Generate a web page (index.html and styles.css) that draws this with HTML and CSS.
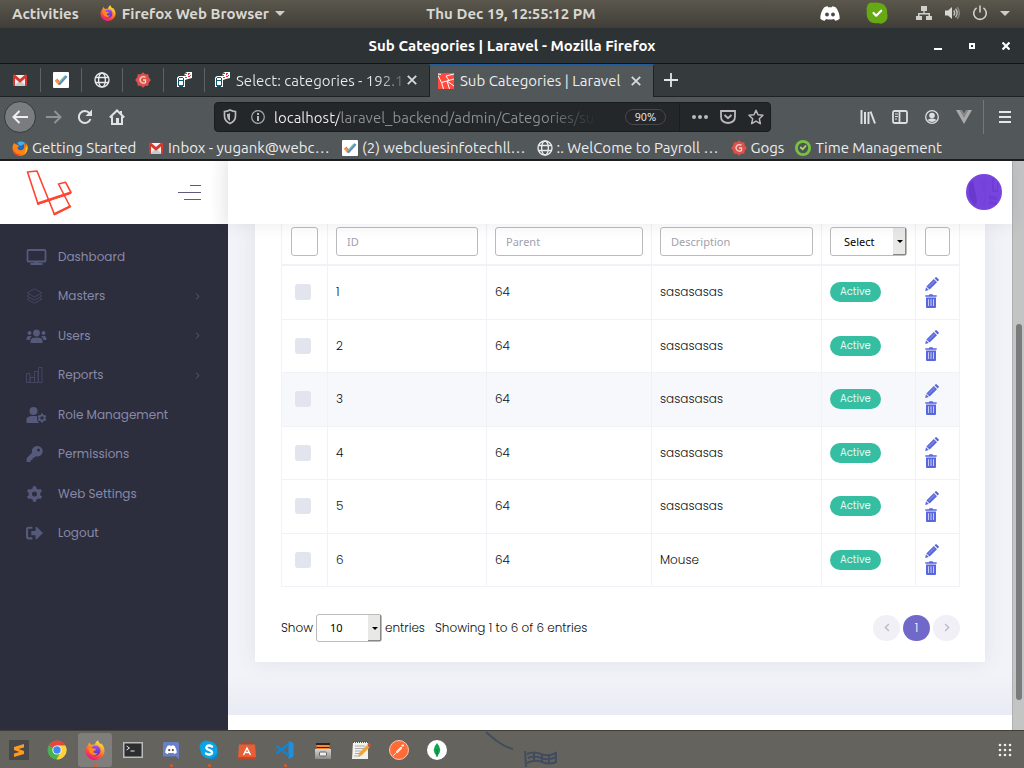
FILE: index.html
```html
<!DOCTYPE html>
<html lang="en">
<head>
<meta charset="utf-8">
<title>Sub Categories | Laravel</title>
<link rel="stylesheet" href="styles.css">
</head>
<body>
<svg class="defs" aria-hidden="true">
  <defs>
    <linearGradient id="fx-g" x1="0.8" y1="0" x2="0.3" y2="1"><stop offset="0" stop-color="#fff04a"/><stop offset="0.4" stop-color="#ff9a26"/><stop offset="0.7" stop-color="#ff4a3c"/><stop offset="1" stop-color="#e31587"/></linearGradient>
    <linearGradient id="fx-p" x1="0" y1="0" x2="0" y2="1"><stop offset="0" stop-color="#9059ff"/><stop offset="1" stop-color="#5b2ab5"/></linearGradient>
    <linearGradient id="steel" x1="0" y1="0" x2="0" y2="1"><stop offset="0" stop-color="#d4d4d2"/><stop offset="1" stop-color="#8d8d8b"/></linearGradient>
  </defs>
  <symbol id="firefox" viewBox="0 0 20 20"><path fill="url(#fx-g)" d="M3 5.2 4.1 2.6 6.4 5C8 4.4 9.4 4.6 10 4.6 10 2.8 11.5 1 13.3.2c0 2 1 2.7 2.3 4l.4-.9c2.6 2.2 3.6 5.400 3.500 8C19 16.300 14.800 20 10 20S.7 16.200.6 11.200C.6 8.500 1.500 6.500 3 5.200z"/><circle cx="10.500" cy="10.500" r="5" fill="url(#fx-p)"/><path fill="#ff8a24" d="M3.400 8.300c1.800-1.300 3.800-.8 4.700.1 1.300 0 2.700.3 3 1-.7 1.100-2.200 1-2.700 2.100.2 1.700 2.600 2.200 4.500 1.200-1.300 2.400-4.500 3-6.700 1.400-1.900-1.300-2.700-3.600-2.800-5.800z"/></symbol>
  <symbol id="firefox-old" viewBox="0 0 20 20"><circle cx="11" cy="9.500" r="8" fill="#1f66c9"/><path fill="#43b2e8" d="M7 3c3-2 7-1.500 9.500.8-1 2.500-4 1.300-4.200 3.400C9.800 7.500 7.500 5.500 7 3z"/><path fill="#ff8212" d="M3 3.500c0 1 1.200 2 3.200 2 .5 1 1.800 1.300 3 1.600-.4 1.300-2.200 1.500-2.400 2.800C8 13.500 12 14 14.500 11c1.500-2 1-5 0-6.500 3 1 3 3 3 3.500.4-1.700 0-3.500-1-5C19 5 20 8 19.500 11 19 16.500 14.500 20 10 20S1 16.500.7 11.500C.5 8.500 1.200 5.300 3 3.500z"/><path fill="#ffcb16" d="M18.500 5.500c2 4.500.5 10.500-4 13 2.500-3 3-5.500 2.500-8 1.300-1.500 1.700-3 1.500-5z"/><path fill="#e5371a" d="M1 10c1 6.500 7 9.500 12 8-4 3-12 1.500-12-8z"/></symbol>
  <symbol id="gmail" viewBox="0 0 16 16"><path fill="#f1f1f1" d="M2 3h12v11H2z"/><path fill="#c9cbcc" d="m2 14 5-5h2l5 5z"/><path fill="#d7372c" d="M1 3.500C1 2.500 2 2 3 2.800L8 7l5-4.200c1-.8 2-.3 2 .7V14h-2V6.500L8 10.700 3 6.500V14H1z"/></symbol>
  <symbol id="tick" viewBox="0 0 16 16"><rect width="16" height="16" rx="1" fill="#fff"/><path fill="none" stroke="#f0a04e" stroke-width="2.600" d="m2.500 8 4 4.500"/><path fill="none" stroke="#ef705c" stroke-width="1.300" d="m3.800 7 3 3.500"/><path fill="none" stroke="#5e86c8" stroke-width="2.600" d="M6 12.500 13.500 4"/><path fill="none" stroke="#75c59c" stroke-width="1.300" d="m6 10.500 6-6.500"/></symbol>
  <symbol id="globe" viewBox="0 0 16 16"><g fill="none" stroke="#e8eaeb" stroke-width="1.400"><circle cx="8" cy="8" r="7"/><ellipse cx="8" cy="8" rx="3.400" ry="7"/><path d="M1.500 5.500h13M1.500 10.500h13"/></g></symbol>
  <symbol id="gogs" viewBox="0 0 16 16"><path fill="#dd5149" d="m8 .3 2.200 1.900h3l.6 3 2 2.800-2 2.800-.6 3h-3L8 15.700l-2.200-1.900h-3l-.6-3L.2 8l2-2.800.6-3h3z"/><path fill="none" stroke="#f6d5d3" stroke-width="1.300" d="M10.500 5.200C7.500 3.700 4.800 5.400 5 8.200c.3 2.800 3.800 3.700 5.500 2.200V8H8"/></symbol>
  <symbol id="adminer" viewBox="0 0 16 16"><path fill="#fff" d="M1 5.500 3 4h5l1-3 2-1h5v6l-4 1-3 1v7H1z"/><path fill="#0b5972" d="M3 5h4v1H3zM2 6h1v8H2zm5 0h1v8H7zM3 8h4v1H3zm0 5h4v2H3z"/><path fill="#e13030" d="M9 1h2v1H9zm3 0h2v1h-2zM8 3h2v1H8zm4-1h1v1h-1zm2 1h1v1h-1zM9 5h2v1H9zm3-1h2v1h-2z"/></symbol>
  <symbol id="laravel-fav" viewBox="0 0 16 16"><path fill="#ff4b3e" d="M0 0h16v16H0z"/><path fill="none" stroke="#fff" stroke-width="1" d="M0 2.500 3.500 9.500 16 6M3.500 9.500 5.500 16M9 8l2.500 8M9 8 16 13M8 3l8-2M8 3l3 4.500M0 1l3 .5"/></symbol>
  <symbol id="clock" viewBox="0 0 16 16"><circle cx="8" cy="8" r="8" fill="#7ac142"/><circle cx="8" cy="8" r="5.200" fill="#4f5456"/><path fill="none" stroke="#a9df61" stroke-width="1.700" d="m5.200 7 2.500 2.300L11 5.500"/></symbol>
  <symbol id="close" viewBox="0 0 10 10"><path fill="none" stroke="#d8dadb" stroke-width="1.800" d="m.8.8 8.400 8.400m0-8.400L.8 9.200"/></symbol>
  <symbol id="monitor" viewBox="0 0 20 16"><rect x="1" y="1" width="18" height="11.500" rx="1" fill="none" stroke="currentColor" stroke-width="1.800"/><path fill="currentColor" d="M8 12h4v2h4v2H4v-2h4z"/></symbol>
  <symbol id="layers" viewBox="0 0 16 16"><g fill="none" stroke="currentColor" stroke-width="1"><path d="m8 .8 7.300 4L8 9 .7 4.800z"/><path d="M2.500 7 .7 8 8 12.200 15.300 8l-1.800-1M2.500 10.100.7 11.200 8 15.300l7.300-4.100-1.800-1.100"/></g></symbol>
  <symbol id="users" viewBox="0 0 20 16"><g fill="currentColor"><circle cx="10" cy="5" r="3.400"/><circle cx="3" cy="5" r="2"/><circle cx="17" cy="5" r="2"/><path d="M4 15v-2c0-2.500 2-3.500 6-3.500s6 1 6 3.500v2zM0 12c0-3 .5-4 3-4 1.200 0 2 .2 2.500.8C4 9.500 3.400 10.500 3.200 12zM20 12c0-3-.5-4-3-4-1.200 0-2 .2-2.500.8 1.500.7 2.100 1.700 2.300 3.200z"/></g></symbol>
  <symbol id="bars" viewBox="0 0 17 16"><g fill="none" stroke="currentColor" stroke-width="1"><path d="M.5 6.500H4v9H.5zM4 10.500h4.500v5H4zM8.500 4.500H12v11H8.500zM12.500.5H16v15h-3.500z"/></g></symbol>
  <symbol id="user-cog" viewBox="0 0 20 16"><g fill="currentColor"><circle cx="7" cy="4" r="4"/><path d="M0 16v-3c0-3 2-4 7-4 1.600 0 2.900.1 3.900.5-.8 2.500-.3 4.500 1.800 6.500z"/></g><g fill="none" stroke="currentColor"><circle cx="15.500" cy="11" r="2.600" stroke-width="1.800"/><path stroke-width="2" d="M15.500 6.500v2M15.500 13.500v2M11.600 8.750l1.700 1M17.700 12.250l1.700 1M11.600 13.250l1.700-1M17.700 9.750l1.700-1"/></g></symbol>
  <symbol id="key" viewBox="0 0 16 16"><path fill="currentColor" fill-rule="evenodd" d="M10.700 0A5.300 5.300 0 0 0 5.600 6.800L.3 12 0 15.500l.5.500H4v-2h2v-2h1.500l1.700-1.700A5.300 5.300 0 1 0 10.700 0zM12 2.500A1.500 1.500 0 1 1 12 5.500 1.500 1.500 0 0 1 12 2.500z"/></symbol>
  <symbol id="cog" viewBox="0 0 16 16"><g fill="none" stroke="currentColor"><circle cx="8" cy="8" r="4.200" stroke-width="3.400"/><path stroke-width="3.400" stroke-linejoin="round" d="M8 .3V3M8 13v2.700M1.300 4.150l2.400 1.400M12.300 10.450l2.400 1.400M1.300 11.850l2.400-1.400M12.300 5.550l2.400-1.400"/></g></symbol>
  <symbol id="logout" viewBox="0 0 16 12"><path fill="none" stroke="currentColor" stroke-width="2" d="M6 1H2.500Q1 1 1 2.500v7Q1 11 2.500 11H6"/><path fill="currentColor" d="M5 4h4V.7Q9.500-.4 10.500.6L16 6l-5.500 5.400Q9.500 12.400 9 11.300V8H5z"/></symbol>
  <symbol id="chev" viewBox="0 0 5 8"><path fill="none" stroke="currentColor" stroke-width="1.200" d="m.8.8 3.200 3.200L.8 7.200"/></symbol>
  <symbol id="pencil" viewBox="0 0 14 14"><path fill="#5867dd" d="m8.800 2 3.200 3.200L4.600 12.500 1.400 9.400zM9.500 1.300l.9-.9q.7-.6 1.400 0l1.800 1.800q.6.700 0 1.400l-.9.9zM1 10.200l2.800 2.800L.2 13.900z"/><path stroke="#a9a8ee" stroke-width=".8" d="M3.600 9.900 9.800 3.700"/></symbol>
  <symbol id="trash" viewBox="0 0 12 14"><path fill="#5867dd" d="M.3 1.300h3.500L4.500.2h3l.7 1.100h3.500v1.500H.3zM1 3.600h10V13q0 1-1 1H2q-1 0-1-1z"/><path stroke="#d5d5fa" stroke-width=".9" d="M3.500 5.200V12M6 5.200V12M8.500 5.200V12"/></symbol>
  <symbol id="discord" viewBox="0 0 20 15"><path fill="#fff" d="M4 1.500Q6.300.3 7.700.3l.5 1h3.600l.5-1Q14.500.5 16 1.500q3.600 5 3.700 11.200-2.300 2-4.500 2.100L14 13q-4 1-8 0l-1.200 1.800Q2.300 14.700.3 12.700.3 6.500 4 1.500z"/><g class="discord-eyes"><circle cx="7" cy="8.500" r="1.900"/><circle cx="13" cy="8.500" r="1.900"/></g></symbol>
</svg>

<header class="topbar">
  <div class="topbar-left">
    <button class="plain">Activities</button>
    <button class="plain app-menu"><svg class="i16"><use href="#firefox"/></svg>Firefox Web Browser<i class="caret"></i></button>
  </div>
  <time class="clock">Thu Dec 19, 12:55:12 PM</time>
  <div class="topbar-right">
    <svg class="tray-discord"><use href="#discord"/></svg>
    <svg width="22" height="22" viewBox="0 0 22 22"><path fill="#66a913" d="M1 5Q2-1 8 .8 12-.2 17 2q5 4 4 9 1.500 4-1 8-4 4-8 2-6 1-9.500-3Q0 14 .8 9 .2 7 1 5z"/><path fill="none" stroke="#fff" stroke-width="2.200" stroke-linecap="round" stroke-linejoin="round" d="m7.500 11 2.700 2.700 5-5"/></svg>
    <svg width="16" height="16" viewBox="0 0 16 16" fill="#d0cfcb"><path d="M5 1h6v5H8.700v2H14v3h2v4h-6v-4h2.500V9.500h-9V11H6v4H0v-4h2V8h5.300V6H5z"/></svg>
    <svg width="16" height="16" viewBox="0 0 16 16"><path fill="#d8d7d4" d="M1 5.500h3L8 2v12L4 10.500H1z"/><g fill="none" stroke="#c2c0bc" stroke-width="1.400"><path d="M9.700 5.500q2 2.500 0 5M11.500 3.800q3.300 4.200 0 8.400"/><path stroke="#8c8a84" d="M13.200 2.200q4.300 5.800 0 11.600"/></g></svg>
    <svg width="16" height="16" viewBox="0 0 16 16" fill="none" stroke="#d0cfcb" stroke-width="1.600"><path d="M4.600 2.800a6.300 6.300 0 1 0 6.800 0M8 .5v7"/></svg>
    <i class="caret"></i>
  </div>
</header>

<div class="titlebar">
  <h1>Sub Categories | Laravel - Mozilla Firefox</h1>
  <div class="window-buttons">
    <button aria-label="Minimize"><svg width="8" height="10"><path fill="#fff" d="M0 7h8v2H0z"/></svg></button>
    <button aria-label="Restore"><svg width="6" height="6"><path fill="none" stroke="#fff" stroke-width="2" d="M1 1h4v4H1z"/></svg></button>
    <button aria-label="Close"><svg width="8" height="8"><path stroke="#fff" stroke-width="2.200" d="m.5.5 7 7m0-7-7 7"/></svg></button>
  </div>
</div>

<nav class="tabs" aria-label="Tabs">
  <button class="pinned" aria-label="Gmail"><svg class="i16"><use href="#gmail"/></svg></button>
  <button class="pinned" aria-label="Tasks"><svg class="i16"><use href="#tick"/></svg></button>
  <button class="pinned" aria-label="Payroll"><svg class="i16"><use href="#globe"/></svg></button>
  <button class="pinned" aria-label="Gogs"><svg class="i16"><use href="#gogs"/></svg></button>
  <button class="pinned" aria-label="Adminer"><svg class="i16"><use href="#adminer"/></svg></button>
  <div class="tab"><svg class="i16"><use href="#adminer"/></svg><span class="tab-title fade">Select: categories - 192.1</span><button aria-label="Close tab"><svg class="i10"><use href="#close"/></svg></button></div>
  <div class="tab active"><svg class="i16"><use href="#laravel-fav"/></svg><span class="tab-title">Sub Categories | Laravel</span><button aria-label="Close tab"><svg class="i10"><use href="#close"/></svg></button></div>
  <button class="new-tab" aria-label="New tab"><svg width="14" height="14"><path stroke="#e3e5e6" stroke-width="1.800" d="M7 0v14M0 7h14"/></svg></button>
</nav>

<div class="toolbar">
  <button class="tool back" aria-label="Back"><svg width="17" height="14" fill="none" stroke="#eee" stroke-width="2"><path d="M1.500 7H16M7.500 1l-6 6 6 6"/></svg></button>
  <button class="tool" aria-label="Forward"><svg width="17" height="14" fill="none" stroke="#909496" stroke-width="2"><path d="M1 7h14.500M9.500 1l6 6-6 6"/></svg></button>
  <button class="tool" aria-label="Reload"><svg width="16" height="16"><path fill="none" stroke="#e0e2e3" stroke-width="2" d="M12.500 4.200A6 6 0 1 0 13.500 10"/><path fill="#e0e2e3" d="M15 .5V7H8.500z"/></svg></button>
  <button class="tool" aria-label="Home"><svg width="16" height="16"><path fill="none" stroke="#e0e2e3" stroke-width="2" d="M.8 8.500 8 1.500l7.200 7M3 7.500V15h10V7.500"/><path fill="#e0e2e3" d="M7 9h3v6H7zM11 2h2v4h-2z"/></svg></button>
  <div class="urlbar">
    <svg class="shield" width="14" height="16" viewBox="0 0 14 16"><path fill="none" stroke="#b8babc" stroke-width="1.700" d="M7 1q3 1.500 5.500 1.500V7q0 5-5.500 7.500Q1.500 12 1.500 7V2.500Q4 2.500 7 1z"/><path fill="#b8babc" d="M7 4v8Q4 10 4 7V5q2 0 3-1z"/></svg>
    <svg class="info" width="14" height="14"><circle cx="7" cy="7" r="6.300" fill="none" stroke="#a8abad" stroke-width="1.200"/><path fill="#b8babc" d="M6 3h2v2H6zm0 3h2v5H6z"/></svg>
    <input type="text" aria-label="Address" value="localhost/laravel_backend/admin/Categories/su">
    <button class="zoom">90%</button>
    <span class="url-actions">
      <svg width="16" height="4" fill="#b8babc"><circle cx="2" cy="2" r="2"/><circle cx="8" cy="2" r="2"/><circle cx="14" cy="2" r="2"/></svg>
      <svg width="16" height="14" fill="none" stroke="#b8babc" stroke-width="1.800"><path d="M1 1h14v5.500q0 6-7 6.500-7-.5-7-6.500z"/><path d="m4.500 5 3.500 3.200L11.500 5"/></svg>
      <svg width="16" height="16" fill="none" stroke="#b8babc" stroke-width="1.500" stroke-linejoin="round"><path d="m8 1.300 2 4.500 5 .5-3.700 3.400 1 5L8 12.200l-4.300 2.500 1-5L1 6.300l5-.5z"/></svg>
    </span>
  </div>
  <button class="tool" aria-label="Library"><svg width="16" height="14" stroke="#dcdedf" stroke-width="2"><path d="M1.500 0v14M5 2v12M8.500 2v12M10.500 1.500 15 13.500"/></svg></button>
  <button class="tool" aria-label="Sidebars"><svg width="16" height="14" fill="none" stroke="#dcdedf" stroke-width="1.800"><rect x="1" y="1" width="14" height="12" rx="1.500"/><path d="M7.500 1v12"/><path stroke-width="1" d="M3 4h3M3 6.500h3M3 9h2"/></svg></button>
  <button class="tool" aria-label="Account"><svg width="14" height="14"><circle cx="7" cy="7" r="6.300" fill="none" stroke="#dcdedf" stroke-width="1.300"/><circle cx="7" cy="5.500" r="2.800" fill="#dcdedf"/><path fill="#dcdedf" d="M2.500 10q2-2 4.500-1.500 2.500-.5 4.500 1.500-4.500 4-9 0z"/></svg></button>
  <button class="tool" aria-label="Vue"><svg width="16" height="14"><path fill="#aaa" d="M0 0h4l4 7 4-7h4L8 14z"/><path fill="#868889" d="M3.500 0H6l2 3.500L10 0h2.500L8 8z"/></svg></button>
  <i class="tool-divider"></i>
  <button class="tool" aria-label="Menu"><svg width="12" height="12" fill="#e4e6e7"><path d="M0 0h12v2H0zM0 5h12v2H0zM0 10h12v2H0z"/></svg></button>
</div>

<nav class="bookmarks" aria-label="Bookmarks">
  <a href="#" class="start"><svg class="i16"><use href="#firefox-old"/></svg><span>Getting Started</span></a>
  <a href="#" class="long"><svg class="i16"><use href="#gmail"/></svg><span>Inbox - yugank@webc…</span></a>
  <a href="#" class="long"><svg class="i16"><use href="#tick"/></svg><span>(2) webcluesinfotechll…</span></a>
  <a href="#" class="long"><svg class="i16"><use href="#globe"/></svg><span>:. WelCome to Payroll …</span></a>
  <a href="#"><svg class="i16"><use href="#gogs"/></svg><span>Gogs</span></a>
  <a href="#"><svg class="i16"><use href="#clock"/></svg><span>Time Management</span></a>
</nav>

<div class="page">
  <aside class="sidebar">
    <div class="brand">
      <svg width="46" height="46" viewBox="0 0 46 46" fill="none" stroke="#ff4431" stroke-linejoin="round" stroke-linecap="round"><path stroke-width="1.600" d="M1.500 2 11 1 28.500 44.500 44 36.500 32.500 14 39.500 12.200 45 22.500 12 34z"/><path stroke-width="2.400" d="M12 33.500 44 23M28.500 44 44 36.500"/></svg>
      <button class="burger" aria-label="Toggle menu"><i></i><i></i><i></i></button>
    </div>
    <ul class="menu">
      <li><a href="#"><svg class="wide"><use href="#monitor"/></svg>Dashboard</a></li>
      <li><a href="#"><svg class="thin"><use href="#layers"/></svg>Masters<svg class="arrow"><use href="#chev"/></svg></a></li>
      <li><a href="#"><svg class="wide"><use href="#users"/></svg>Users<svg class="arrow"><use href="#chev"/></svg></a></li>
      <li><a href="#"><svg class="thin"><use href="#bars"/></svg>Reports<svg class="arrow"><use href="#chev"/></svg></a></li>
      <li><a href="#"><svg class="wide"><use href="#user-cog"/></svg>Role Management</a></li>
      <li><a href="#"><svg><use href="#key"/></svg>Permissions</a></li>
      <li><a href="#"><svg><use href="#cog"/></svg>Web Settings</a></li>
      <li><a href="#"><svg><use href="#logout"/></svg>Logout</a></li>
    </ul>
  </aside>
  <div class="main">
    <div class="header">
      <svg width="36" height="36" viewBox="0 0 36 36" role="img" aria-label="Profile"><clipPath id="av"><circle cx="18" cy="18" r="18"/></clipPath><g clip-path="url(#av)"><path fill="#7745dd" d="M0 0h36v36H0z"/><path fill="#6938cd" d="m3 9 4-2 4 20-2 5-6-9z"/><path fill="#6e3dd4" d="M26 4h2v12h3V8h1v10h-6zM23 21l8 2v3l-8-1zm0 6 8 1v3l-8-1z"/><path stroke="#7340d8" d="m14 4 4 14V3M21 8l-3 22" fill="none"/></g></svg>
    </div>
    <main class="content">
      <section class="card">
        <table>
          <colgroup><col class="c-check"><col class="c-id"><col class="c-parent"><col><col class="c-status"><col class="c-act"></colgroup>
          <thead>
            <tr>
              <th><input type="text" aria-label="Filter selection"></th>
              <th><input type="text" aria-label="ID" placeholder="ID"></th>
              <th><input type="text" aria-label="Parent" placeholder="Parent"></th>
              <th><input type="text" aria-label="Description" placeholder="Description"></th>
              <th><span class="select"><select aria-label="Status"><option>Select</option><option>Active</option></select></span></th>
              <th><input type="text" aria-label="Filter actions"></th>
            </tr>
          </thead>
          <tbody>
            <tr><td><input type="checkbox" aria-label="Row 1"></td><td>1</td><td>64</td><td>sasasasas</td><td><span class="badge">Active</span></td><td><span class="actions"><button aria-label="Edit"><svg><use href="#pencil"/></svg></button><button aria-label="Delete"><svg class="bin"><use href="#trash"/></svg></button></span></td></tr>
            <tr><td><input type="checkbox" aria-label="Row 2"></td><td>2</td><td>64</td><td>sasasasas</td><td><span class="badge">Active</span></td><td><span class="actions"><button aria-label="Edit"><svg><use href="#pencil"/></svg></button><button aria-label="Delete"><svg class="bin"><use href="#trash"/></svg></button></span></td></tr>
            <tr class="hovered"><td><input type="checkbox" aria-label="Row 3"></td><td>3</td><td>64</td><td>sasasasas</td><td><span class="badge">Active</span></td><td><span class="actions"><button aria-label="Edit"><svg><use href="#pencil"/></svg></button><button aria-label="Delete"><svg class="bin"><use href="#trash"/></svg></button></span></td></tr>
            <tr><td><input type="checkbox" aria-label="Row 4"></td><td>4</td><td>64</td><td>sasasasas</td><td><span class="badge">Active</span></td><td><span class="actions"><button aria-label="Edit"><svg><use href="#pencil"/></svg></button><button aria-label="Delete"><svg class="bin"><use href="#trash"/></svg></button></span></td></tr>
            <tr><td><input type="checkbox" aria-label="Row 5"></td><td>5</td><td>64</td><td>sasasasas</td><td><span class="badge">Active</span></td><td><span class="actions"><button aria-label="Edit"><svg><use href="#pencil"/></svg></button><button aria-label="Delete"><svg class="bin"><use href="#trash"/></svg></button></span></td></tr>
            <tr><td><input type="checkbox" aria-label="Row 6"></td><td>6</td><td>64</td><td>Mouse</td><td><span class="badge">Active</span></td><td><span class="actions"><button aria-label="Edit"><svg><use href="#pencil"/></svg></button><button aria-label="Delete"><svg class="bin"><use href="#trash"/></svg></button></span></td></tr>
          </tbody>
        </table>
        <div class="table-footer">
          <label>Show <span class="select length"><select><option>10</option><option>25</option></select></span> entries</label>
          <p>Showing 1 to 6 of 6 entries</p>
          <div class="pager">
            <button aria-label="Previous"><svg class="prev"><use href="#chev"/></svg></button>
            <button class="current">1</button>
            <button aria-label="Next"><svg><use href="#chev"/></svg></button>
          </div>
        </div>
      </section>
    </main>
    <footer class="page-footer"></footer>
  </div>
  <div class="scrollbar"><i></i></div>
</div>

<footer class="dock">
  <button aria-label="Sublime Text"><svg width="20" height="20"><rect width="20" height="20" rx="1" fill="#46484a"/><path fill="#ff9a1f" d="m5 7 10-3v3.500L9.500 9l5.500 2v3L5 17v-3.500l5.500-1.500L5 10z"/></svg></button>
  <button aria-label="Chrome"><svg width="20" height="20"><circle cx="10" cy="10" r="9.500" fill="#4caf50"/><path fill="#e2483d" d="M10 10 1.800 5.200A9.500 9.500 0 0 1 18.400 5.500H10z"/><path fill="#fdd23a" d="M10 5.500h8.400A9.500 9.500 0 0 1 9.500 19.500l4.500-8z"/><circle cx="10" cy="10" r="4.600" fill="#fff"/><circle cx="10" cy="10" r="3.700" fill="#4285f4"/></svg></button>
  <button class="focused running" aria-label="Firefox"><svg width="20" height="20"><use href="#firefox"/></svg></button>
  <button aria-label="Terminal"><svg width="20" height="16"><path fill="#bbb" d="M0 0h20v16H0z"/><path fill="#2b2d2e" d="M1.500 1.500h17v13h-17z"/><path fill="none" stroke="#eee" d="m3.500 4 3 2-3 2M7.500 9h4"/></svg></button>
  <button class="running" aria-label="Discord"><svg width="18" height="18" viewBox="0 0 18 18"><path fill="#6a7fc9" d="M2.500 1h13Q17 1 17 2.500V18l-3-2.500H2.500Q1 15.500 1 14V2.500Q1 1 2.500 1z"/><svg x="3" y="4" width="12" height="9"><use href="#discord"/></svg></svg></button>
  <button class="running" aria-label="Skype"><svg width="20" height="20"><circle cx="7" cy="7" r="6.500" fill="#0a9fdf"/><circle cx="13.500" cy="13.500" r="6" fill="#0a86c8"/><circle cx="10" cy="10" r="8.500" fill="#0ba4e4"/><path fill="none" stroke="#fff" stroke-width="2.400" stroke-linecap="round" d="M13 6.500Q10 4.500 8 6.200 6 8.500 9.800 9.800q4.700 1.500 2.700 4-2.300 1.700-5.500-.3"/></svg></button>
  <button aria-label="Software"><svg width="20" height="20"><path fill="none" stroke="#b9402a" stroke-width="1.500" d="M6 6V3q4-3.500 8 0v3"/><path fill="#e95f35" d="M2 4.500h16L19 18H1z"/><path fill="#c5472b" d="M1 17h18v2H1z"/><path fill="none" stroke="#fff" stroke-width="1.400" d="m6.500 15 3.500-7 3.500 7M7 12.500h6"/></svg></button>
  <button class="running" aria-label="Code"><svg width="20" height="20"><path fill="#2090dc" d="m13.500 1 5 2v13.500l-5 2.500z"/><path fill="none" stroke="#1683cc" stroke-width="2.400" d="m1.500 6 12.500 9.800M1.500 13.500 14 3.500"/></svg></button>
  <button aria-label="Files"><svg width="18" height="20"><path fill="#656361" d="M2 1h14l2 10H0z"/><path fill="#f28a3c" d="M2.500 4h13v5h-13z"/><path fill="#3c2215" d="M2 3h14v2H2zM2.500 7h13v1h-13z"/><path fill="url(#steel)" d="M1 9h16v10H1z"/><rect x="5.500" y="12" width="7" height="4" rx="1" fill="#eee" stroke="#666"/></svg></button>
  <button aria-label="Text Editor"><svg width="20" height="20"><path fill="#f2f2ec" d="M2 2h15v17H1z"/><path stroke="#555" stroke-dasharray="1 1" d="M2 2h15" stroke-width="2"/><path stroke="#aaa" d="M4 6h10M4 8.500h10M4 11h6M4 13.500h5M3 16h6"/><path fill="#f2a33a" d="m8 13 8-8 2.500 2.500-8 8-3 1z"/><path fill="#e0473d" d="m16 4 2-1 2 2-1 2z"/></svg></button>
  <button aria-label="Postman"><svg width="20" height="20"><circle cx="10" cy="10" r="9.500" fill="#ff6c37" stroke="#ffc6af"/><path stroke="#fff" stroke-width="2.200" stroke-linecap="round" d="m8 12 4-4M13.500 5.500h.5"/><path stroke="#ffe0d4" d="m4 16 8-8"/></svg></button>
  <button aria-label="MongoDB"><svg width="20" height="20"><circle cx="10" cy="10" r="10" fill="#fff"/><path fill="#13a353" d="M10 3q6.500 7 0 13.500Q3.500 10 10 3z"/><path stroke="#0b7a3d" d="M10 9v8"/></svg></button>
  <svg class="wallpaper" width="90" height="37" fill="none" stroke="#414d5d" stroke-width="2"><path d="m4 1 7 6q11 9 20 11M43 20l1 16" /><path d="M45 23q7-3 14 0t15-1v9q-7 3-14 0t-15 1M46 27q6-3 13 0t15-1M52 22v9M60 23v9M67 23v9"/></svg>
  <button class="apps" aria-label="Show applications"><svg width="14" height="14" fill="#f0f0f0"><g id="r"><circle cx="2" cy="2" r="1.300"/><circle cx="7" cy="2" r="1.300"/><circle cx="12" cy="2" r="1.300"/></g><use href="#r" y="5"/><use href="#r" y="10"/></svg></button>
</footer>
</body>
</html>
```
FILE: styles.css
```css
* { box-sizing: border-box; }
html, body { height: 100%; }
body {
  margin: 0;
  display: flex;
  flex-direction: column;
  overflow: hidden;
  font-family: Ubuntu, "Noto Sans", sans-serif;
  font-size: 15px;
  color: #eceded;
  background: #52575a;
}
button {
  border: 0;
  padding: 0;
  background: none;
  color: inherit;
  font: inherit;
  display: flex;
  align-items: center;
  justify-content: center;
}
a { color: inherit; text-decoration: none; }
svg { flex: none; display: block; }
.defs { position: absolute; width: 0; height: 0; }
.i16 { width: 16px; height: 16px; }
.i10 { width: 10px; height: 10px; }

/* Desktop panel */
.topbar {
  flex: 0 0 28px;
  display: grid;
  grid-template-columns: 1fr auto 1fr;
  align-items: center;
  padding: 0 14px 2px 12px;
  background: linear-gradient(#5b574d, #403e38);
  color: #d9d7d2;
  font-weight: 700;
  font-size: 15px;
}
.topbar-left, .topbar-right, .app-menu { display: flex; align-items: center; }
.topbar-left { gap: 21px; }
.app-menu { gap: 6px; white-space: nowrap; }
.topbar-right { justify-content: flex-end; gap: 12px; }
.caret { border: 5px solid transparent; border-top-color: #cfcdc8; border-bottom: 0; }
.tray-discord { width: 20px; height: 15px; margin-right: 14px; }
.topbar-right svg:nth-child(2) { margin-right: 16px; }
.discord-eyes { fill: #4c4a44; }

.titlebar {
  flex: 0 0 36px;
  display: grid;
  grid-template-columns: 1fr auto 1fr;
  align-items: center;
  background: #2d3235;
  border-bottom: 1px solid #111415;
}
.titlebar h1 { grid-column: 2; margin: 0; font-size: 15px; color: #fff; }
.window-buttons { display: flex; justify-content: flex-end; gap: 14px; padding-right: 8px; }
.window-buttons button { width: 20px; height: 20px; }

/* Tab strip */
.tabs {
  flex: 0 0 33px;
  display: flex;
  background: #353a3d;
  border-bottom: 1px solid #1f2224;
}
.pinned { flex: 0 0 41px; }
.pinned:first-child { flex-basis: 40px; }
.pinned + .pinned, .pinned + .tab {
  background: linear-gradient(#5e6366, #5e6366) 0 center / 1px 24px no-repeat;
}
.tab {
  flex: 0 1 225px;
  min-width: 0;
  display: flex;
  align-items: center;
  padding: 0 12px 0 10px;
}
.tab .i16 { margin-right: 6px; }
.tab.active {
  background: #52575a;
  border-top: 2px solid #215d9c;
  border-left: 1px solid #1f2224;
  border-right: 1px solid #1f2224;
  margin-bottom: -1px;
  padding: 0 12px 2px 8px;
}
.tab-title { flex: 1; min-width: 0; white-space: nowrap; }
.fade {
  color: transparent;
  background: linear-gradient(to right, #eceded 82%, #5e6264 98%);
  background-clip: text;
}
.new-tab { width: 34px; }

/* Toolbar */
.toolbar { flex: 0 0 40px; display: flex; align-items: center; padding: 0 3px 0 4px; }
.tool { flex: 0 0 32px; height: 32px; border-radius: 50%; }
.tool.back { background: #797d7f; border: 1px solid #34383a; margin-right: 1px; }
.urlbar {
  flex: 1;
  min-width: 0;
  height: 30px;
  display: flex;
  align-items: center;
  margin: 0 81px;
  padding: 0 6px 0 8px;
  border: 1px solid #1a1d1e;
  border-radius: 4px;
  background: #232729;
}
.shield { margin-right: 14px; }
.info { margin-right: 9px; }
.urlbar input {
  flex: 1;
  min-width: 0;
  border: 0;
  padding: 0;
  font: inherit;
  color: transparent;
  background: linear-gradient(to right, #f4f4f4 65px, #8f9294 65px, #8f9294 270px, transparent 322px);
  background-clip: text;
}
.zoom {
  width: 41px;
  height: 16px;
  margin: 0 13px 0 12px;
  border: 1px solid #45494b;
  border-radius: 8px;
  font-size: 11px;
}
.url-actions {
  display: flex;
  align-items: center;
  gap: 12px;
  height: 28px;
  padding-left: 12px;
  border-left: 1px solid #1a1d1e;
}
.tool-divider { width: 1px; height: 34px; margin: 0 5px 0 3px; background: #74787a; }

.bookmarks {
  flex: 0 0 24px;
  display: flex;
  align-items: center;
  gap: 11px;
  padding: 0 12px;
  border-bottom: 2px solid #1a1c1d;
}
.bookmarks a { display: flex; align-items: center; gap: 4px; }
.bookmarks .start { min-width: 125px; }
.bookmarks .long { min-width: 183px; }
.bookmarks span { white-space: nowrap; line-height: 22px; }

/* Admin page */
.page {
  flex: 1;
  min-height: 0;
  display: flex;
  overflow: hidden;
  background: #f2f3f8;
  color: #0d0f12;
  font-family: Poppins, Inter, sans-serif;
  font-size: 12px;
  font-weight: 300;
}
.sidebar { flex: 0 0 228px; background: #2c2d3d; }
.brand {
  height: 63px;
  display: flex;
  align-items: center;
  justify-content: space-between;
  padding: 0 27px 0 26px;
  background: linear-gradient(to right, #fff 210px, #f7f7f8);
}
.burger { width: 23px; flex-direction: column; align-items: flex-end; gap: 6px; }
.burger i { height: 1px; width: 17px; background: #5d5b7f; }
.burger i:first-child { width: 11px; }
.burger i:nth-child(2) { width: 23px; }
.menu { margin: 0; padding: 13px 0 0; list-style: none; }
.menu a {
  height: 39px;
  display: flex;
  align-items: center;
  padding: 0 28px 0 26px;
  font-weight: 400;
  color: #868aa8;
}
.menu li:nth-child(even) a { height: 40px; }
.menu svg { width: 17px; height: 16px; margin-right: 15px; color: #555a7b; }
.menu svg.wide { width: 21px; margin-right: 11px; }
.menu svg.thin { color: #44475f; }
.menu svg.arrow { width: 5px; height: 7px; margin: 0 0 0 auto; color: #4a4d66; }

.main { flex: 1; min-width: 0; display: flex; flex-direction: column; }
.header {
  position: relative;
  z-index: 1;
  flex: 0 0 63px;
  display: flex;
  align-items: center;
  justify-content: flex-end;
  padding: 0 10px 2px 0;
  background: #fff;
  box-shadow: 0 0 16px rgba(82, 63, 105, 0.12);
}
.content {
  flex: none;
  padding: 0 27px 53px;
  background: linear-gradient(#f2f3f8 92%, #e8ebf4);
}
.card {
  padding: 0 25px 20px 26px;
  background: #fff;
  box-shadow: 0 0 20px rgba(82, 63, 105, 0.1);
}
.page-footer { flex: 1; background: #fff; }

table { width: 100%; border-collapse: collapse; table-layout: fixed; }
.c-check { width: 46px; }
.c-id { width: 159px; }
.c-parent { width: 165px; }
.c-status { width: 94px; }
.c-act { width: 44px; }
th, td { padding: 0 8px; border: 1px solid #f1f2f7; text-align: left; }
th { padding: 3px 8px 8px; border-top: 0; border-bottom-width: 2px; vertical-align: top; }
th:first-child, th:last-child, td:last-child { padding-left: 9px; padding-right: 9px; }
td { height: 53px; }
tbody tr:nth-child(odd) td { height: 54px; }
.hovered { background: #f7f8fb; }
th input, select {
  display: block;
  width: 100%;
  height: 29px;
  padding: 0 10px;
  border: 1px solid #bbb;
  border-radius: 3px;
  background: #fff;
  font-family: "Noto Sans", sans-serif;
  font-size: 11px;
}
th input::placeholder { color: #a0a2ad; }
select { appearance: none; padding: 0 13px; color: #000; }
.select {
  position: relative;
  display: block;
}
.select::before {
  content: "";
  position: absolute;
  inset: 1px 1px 1px auto;
  width: 12px;
  background: #e8e8e7;
  border-right: 1px solid #888;
  border-bottom: 1px solid #888;
  pointer-events: none;
}
.select::after {
  content: "";
  position: absolute;
  top: 13px;
  right: 4px;
  border: 3px solid transparent;
  border-top-color: #000;
  border-bottom: 0;
  pointer-events: none;
}
td input[type="checkbox"] {
  appearance: none;
  display: block;
  width: 16px;
  height: 16px;
  margin: 0 0 0 5px;
  border-radius: 3px;
  background: #e2e5ed;
}
.badge {
  display: inline-block;
  height: 20px;
  padding: 0 10px;
  border-radius: 10px;
  background: #36bea2;
  color: #e2f8f2;
  font-size: 10px;
  font-weight: 400;
  line-height: 20px;
}
.actions { display: flex; flex-direction: column; gap: 3px; align-items: flex-start; }
.actions svg { width: 14px; height: 14px; }
.actions .bin { width: 12px; }

.table-footer { display: flex; align-items: center; padding-top: 27px; }
.table-footer label { display: flex; align-items: center; gap: 3px; }
.length { width: 66px; }
.length select { height: 28px; }
.table-footer p { margin: 0 0 0 10px; }
.pager { margin-left: auto; display: flex; gap: 3px; }
.pager button { width: 27px; height: 26px; border-radius: 13px; background: #f1f0f7; color: #b9bac9; }
.pager svg { width: 6px; height: 9px; }
.pager .prev { transform: rotate(180deg); }
.pager .current { background: #7169ca; color: #fff; }

.scrollbar { flex: 0 0 12px; padding: 163px 2px 0; border-left: 1px solid #aeb0b0; background: #c3c4c4; }
.scrollbar i { display: block; width: 6px; height: 376px; margin: 0 auto; border-radius: 3px; background: #777b7c; }

/* Dock */
.dock {
  flex: 0 0 37px;
  display: flex;
  align-items: center;
  background: #65635e;
  border-top: 1px solid #403f39;
}
.dock button { position: relative; flex: 0 0 34px; height: 34px; margin: 0 2px; border-radius: 3px; }
.dock .focused { background: #807e7b; }
.running::after {
  content: "";
  position: absolute;
  bottom: 0;
  width: 3px;
  height: 3px;
  border-radius: 50%;
  background: #e95420;
}
.wallpaper { margin-left: 26px; }
.dock .apps { margin-left: auto; }
```
